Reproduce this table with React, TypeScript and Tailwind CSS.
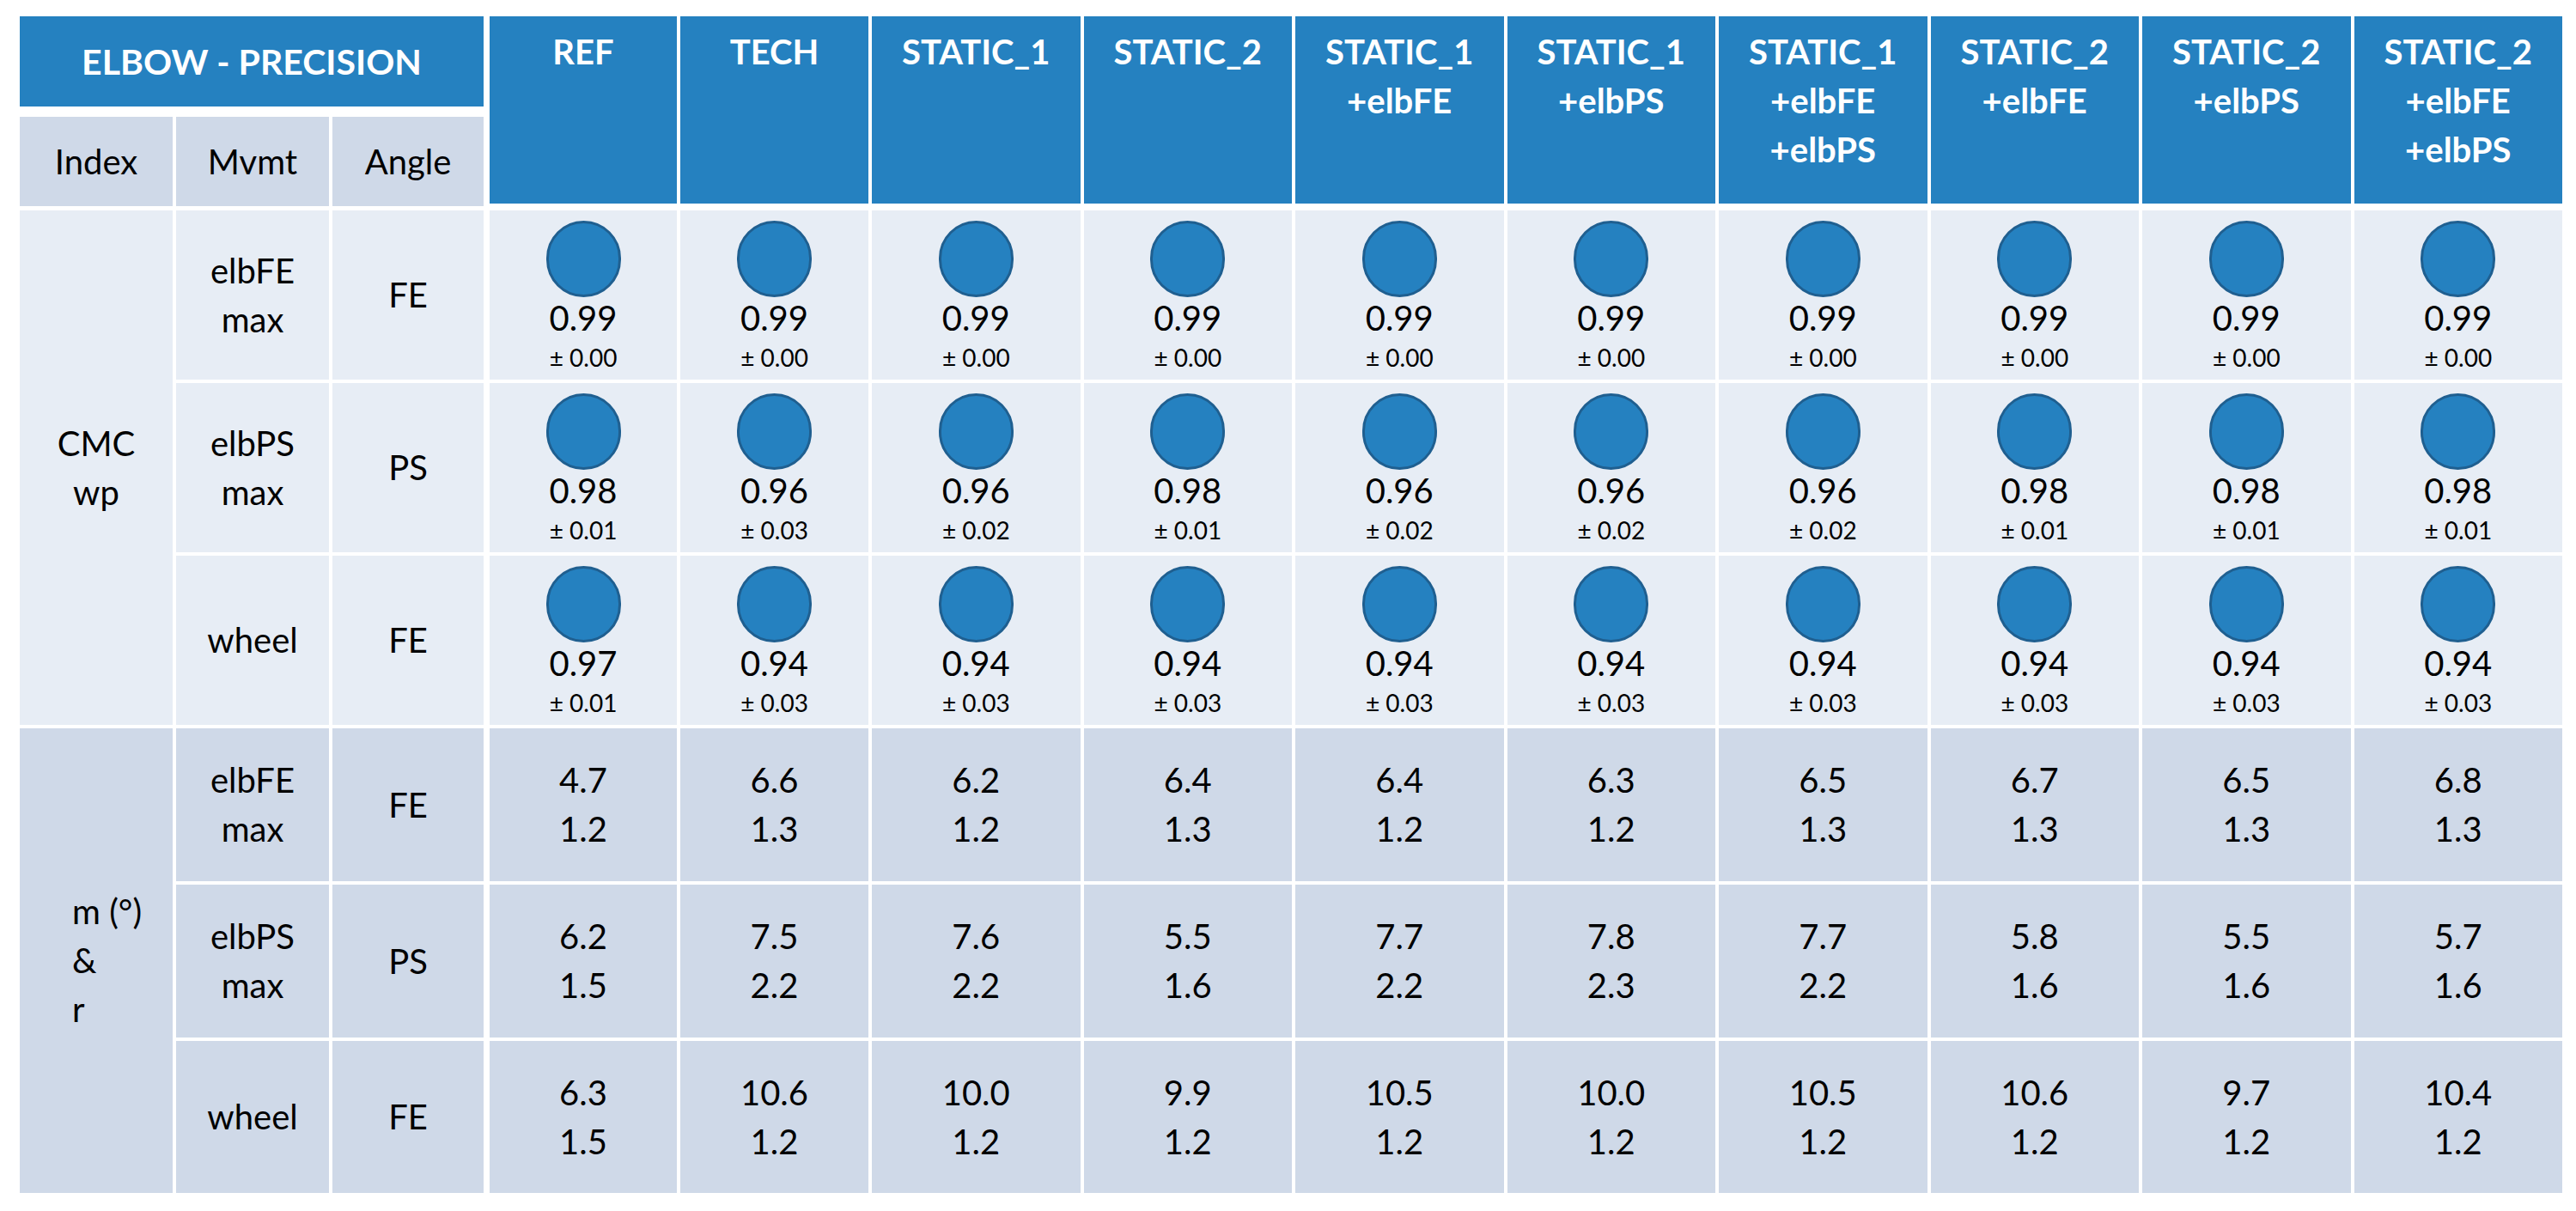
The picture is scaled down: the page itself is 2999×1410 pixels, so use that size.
import React from "react";

const headers: string[][] = [
  ["REF"],
  ["TECH"],
  ["STATIC_1"],
  ["STATIC_2"],
  ["STATIC_1", "+elbFE"],
  ["STATIC_1", "+elbPS"],
  ["STATIC_1", "+elbFE", "+elbPS"],
  ["STATIC_2", "+elbFE"],
  ["STATIC_2", "+elbPS"],
  ["STATIC_2", "+elbFE", "+elbPS"],
];

const cmcRows: { mv: string[]; angle: string; vals: [string, string][] }[] = [
  {
    mv: ["elbFE", "max"],
    angle: "FE",
    vals: Array.from({ length: 10 }, () => ["0.99", "0.00"] as [string, string]),
  },
  {
    mv: ["elbPS", "max"],
    angle: "PS",
    vals: [
      ["0.98", "0.01"],
      ["0.96", "0.03"],
      ["0.96", "0.02"],
      ["0.98", "0.01"],
      ["0.96", "0.02"],
      ["0.96", "0.02"],
      ["0.96", "0.02"],
      ["0.98", "0.01"],
      ["0.98", "0.01"],
      ["0.98", "0.01"],
    ],
  },
  {
    mv: ["wheel"],
    angle: "FE",
    vals: [
      ["0.97", "0.01"],
      ...Array.from({ length: 9 }, () => ["0.94", "0.03"] as [string, string]),
    ],
  },
];

const mRows: { mv: string[]; angle: string; vals: [string, string][] }[] = [
  {
    mv: ["elbFE", "max"],
    angle: "FE",
    vals: [
      ["4.7", "1.2"],
      ["6.6", "1.3"],
      ["6.2", "1.2"],
      ["6.4", "1.3"],
      ["6.4", "1.2"],
      ["6.3", "1.2"],
      ["6.5", "1.3"],
      ["6.7", "1.3"],
      ["6.5", "1.3"],
      ["6.8", "1.3"],
    ],
  },
  {
    mv: ["elbPS", "max"],
    angle: "PS",
    vals: [
      ["6.2", "1.5"],
      ["7.5", "2.2"],
      ["7.6", "2.2"],
      ["5.5", "1.6"],
      ["7.7", "2.2"],
      ["7.8", "2.3"],
      ["7.7", "2.2"],
      ["5.8", "1.6"],
      ["5.5", "1.6"],
      ["5.7", "1.6"],
    ],
  },
  {
    mv: ["wheel"],
    angle: "FE",
    vals: [
      ["6.3", "1.5"],
      ["10.6", "1.2"],
      ["10.0", "1.2"],
      ["9.9", "1.2"],
      ["10.5", "1.2"],
      ["10.0", "1.2"],
      ["10.5", "1.2"],
      ["10.6", "1.2"],
      ["9.7", "1.2"],
      ["10.4", "1.2"],
    ],
  },
];

function Lines({ lines }: { lines: string[] }) {
  return (
    <div className="text-center">
      {lines.map((l, i) => (
        <div key={i}>{l}</div>
      ))}
    </div>
  );
}

export default function App() {
  return (
    <div
      className="w-[2999px] h-[1410px] bg-white pt-[19px] pl-[23px] text-black text-[40px] leading-[57px]"
      style={{ fontFamily: "Lato, 'Open Sans', sans-serif" }}
    >
      <div className="grid w-[2960px] grid-cols-[178px_178px_179px_218px_219px_repeat(8,minmax(0,1fr))] grid-rows-[222px_197px_197px_197px_178px_178px_177px] gap-x-[4px] gap-y-[4px]">
        {/* left header block */}
        <div className="col-span-3 flex flex-col">
          <div className="h-[105px] bg-[#2581c0] flex items-center justify-center text-white font-bold text-[41px] mr-[3px]">
            ELBOW - PRECISION
          </div>
          <div className="mt-[12px] grid grid-cols-[178px_178px_179px] gap-x-[4px] h-[104px]">
            <div className="bg-[#cfd9e8] flex items-center justify-center">Index</div>
            <div className="bg-[#cfd9e8] flex items-center justify-center">Mvmt</div>
            <div className="bg-[#cfd9e8] flex items-center justify-center mr-[3px]">Angle</div>
          </div>
        </div>
        {headers.map((h, i) => (
          <div
            key={i}
            className="h-[218px] bg-[#2581c0] text-white font-bold pt-[13px] text-center"
          >
            <Lines lines={h} />
          </div>
        ))}

        {/* CMC rows */}
        <div className="row-span-3 bg-[#e7edf5] flex items-center justify-center text-center">
          <div>
            <div>CMC</div>
            <div>wp</div>
          </div>
        </div>
        {cmcRows.map((r, ri) => (
          <React.Fragment key={"c" + ri}>
            <div
              className="bg-[#e7edf5] flex items-center justify-center"
              style={{ gridRow: ri + 2, gridColumn: 2 }}
            >
              <Lines lines={r.mv} />
            </div>
            <div
              className="bg-[#e7edf5] flex items-center justify-center mr-[3px]"
              style={{ gridRow: ri + 2, gridColumn: 3 }}
            >
              {r.angle}
            </div>
            {r.vals.map((v, ci) => (
              <div
                key={ci}
                className="bg-[#e7edf5] flex flex-col items-center pt-[12px]"
                style={{ gridRow: ri + 2, gridColumn: ci + 4 }}
              >
                <div className="w-[87px] h-[89px] rounded-full bg-[#2581c0] border-[3px] border-[#1f5f90]" />
                <div className="leading-[48px]">{v[0]}</div>
                <div className="text-[28px] leading-[44px]">± {v[1]}</div>
              </div>
            ))}
          </React.Fragment>
        ))}

        {/* m rows */}
        <div
          className="bg-[#cfd9e8] flex items-center pl-[61px]"
          style={{ gridRow: "5 / span 3", gridColumn: 1 }}
        >
          <div className="text-left">
            <div>m (°)</div>
            <div>&amp;</div>
            <div>r</div>
          </div>
        </div>
        {mRows.map((r, ri) => (
          <React.Fragment key={"m" + ri}>
            <div
              className="bg-[#cfd9e8] flex items-center justify-center"
              style={{ gridRow: ri + 5, gridColumn: 2 }}
            >
              <Lines lines={r.mv} />
            </div>
            <div
              className="bg-[#cfd9e8] flex items-center justify-center mr-[3px]"
              style={{ gridRow: ri + 5, gridColumn: 3 }}
            >
              {r.angle}
            </div>
            {r.vals.map((v, ci) => (
              <div
                key={ci}
                className="bg-[#cfd9e8] flex items-center justify-center"
                style={{ gridRow: ri + 5, gridColumn: ci + 4 }}
              >
                <Lines lines={[v[0], v[1]]} />
              </div>
            ))}
          </React.Fragment>
        ))}
      </div>
    </div>
  );
}
